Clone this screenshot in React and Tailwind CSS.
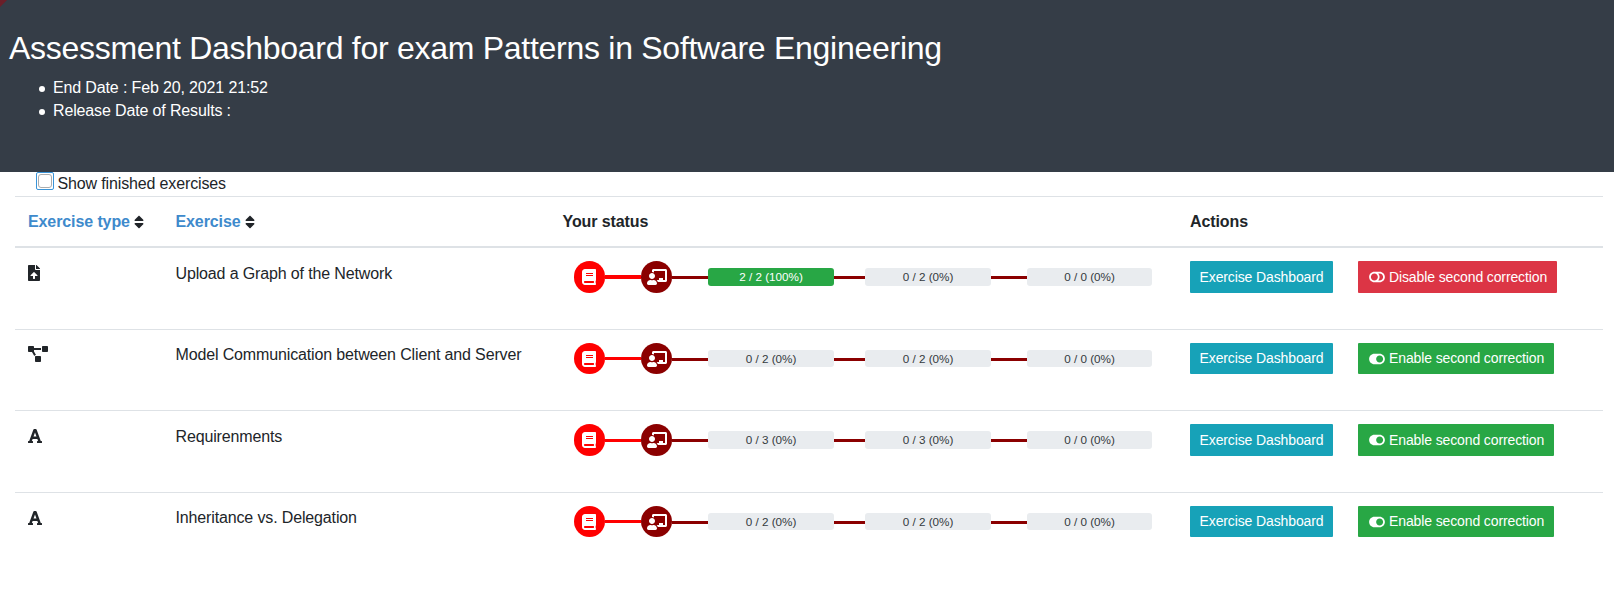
import React from 'react';
import {
  FaFileUpload,
  FaProjectDiagram,
  FaFont,
  FaSort,
  FaBook,
  FaChalkboardTeacher,
  FaToggleOn,
  FaToggleOff,
} from 'react-icons/fa';

const rows = [
  { icon: FaFileUpload, iconSize: 'mt-1 w-3', name: 'Upload a Graph of the Network', bars: ['2 / 2 (100%)', '0 / 2 (0%)', '0 / 0 (0%)'], done: true, height: 'h-[81px]', nameTop: 'pt-px', circle: 'h-8', red: 'h-1', bar: 'h-[18px]', button: 'h-8' },
  { icon: FaProjectDiagram, iconSize: 'mt-[3px] w-5', name: 'Model Communication between Client and Server', bars: ['0 / 2 (0%)', '0 / 2 (0%)', '0 / 0 (0%)'], height: 'h-[81px] border-t', nameTop: 'pt-0', circle: 'h-[31px]', red: 'h-[3px]', bar: 'h-[17px]', button: 'h-[31px]' },
  { icon: FaFont, iconSize: 'mt-1 w-[14px]', name: 'Requirenments', bars: ['0 / 3 (0%)', '0 / 3 (0%)', '0 / 0 (0%)'], height: 'h-[82px] border-t', nameTop: 'pt-px', circle: 'h-8', red: 'h-[3px]', bar: 'h-[18px]', button: 'h-8' },
  { icon: FaFont, iconSize: 'mt-1 w-[14px]', name: 'Inheritance vs. Delegation', bars: ['0 / 2 (0%)', '0 / 2 (0%)', '0 / 0 (0%)'], height: 'h-[82px] border-t', nameTop: 'pt-0', circle: 'h-[31px]', red: 'h-[3px]', bar: 'h-[17px]', button: 'h-[31px]' },
];

function Progress({ label, done, height, width }) {
  return (
    <div className={`flex items-center justify-center rounded-[3px] text-[11.7px] leading-none tracking-normal ${height} ${width} ${done ? 'bg-[#28a745] text-white' : 'bg-[#e9ecef] text-[#343a40]'}`}>
      {label}
    </div>
  );
}

function Status({ row }) {
  return (
    <div className="flex items-center">
      <div className={`flex w-[31px] items-center justify-center rounded-full bg-[#ff0000] pr-px text-white ${row.circle}`}>
        <FaBook className="h-4 w-[14px]" />
      </div>
      <div className={`w-9 bg-[#ff0000] ${row.red}`} />
      <div className={`flex w-[31px] items-center justify-center rounded-full bg-[#8b0000] text-white ${row.circle}`}>
        <FaChalkboardTeacher className="h-4 w-5" />
      </div>
      <div className="mt-px h-[3px] w-9 bg-[#8b0000]" />
      <Progress label={row.bars[0]} done={row.done} height={row.bar} width="w-[126px]" />
      <div className="mt-px h-[3px] w-[31px] bg-[#8b0000]" />
      <Progress label={row.bars[1]} height={row.bar} width="w-[126px]" />
      <div className="mt-px h-[3px] w-9 bg-[#8b0000]" />
      <Progress label={row.bars[2]} height={row.bar} width="w-[125px]" />
    </div>
  );
}

function Row({ row }) {
  const Icon = row.icon;
  const Toggle = row.done ? FaToggleOff : FaToggleOn;
  return (
    <div className={`flex items-start border-[#dee2e6] pt-[13px] pl-[13px] ${row.height}`}>
      <div className="flex w-[147.5px]">
        <Icon className={`h-4 ${row.iconSize}`} />
      </div>
      <div className={`w-[398.5px] leading-6 ${row.nameTop}`}>{row.name}</div>
      <div className="w-[616px]">
        <Status row={row} />
      </div>
      <div className="flex gap-[25px] text-[14px] text-white">
        <button className={`w-[143px] rounded-[1px] bg-[#17a2b8] tracking-[-0.12px] ${row.button}`}>Exercise Dashboard</button>
        <button className={`flex items-center gap-1 rounded-[1px] pl-[11px] tracking-[-0.12px] ${row.button} ${row.done ? 'w-[199px] bg-[#dc3545]' : 'w-[196px] bg-[#28a745]'}`}>
          <Toggle className="h-[14px] w-4 shrink-0" />
          <span className="whitespace-nowrap">{row.done ? 'Disable' : 'Enable'} second correction</span>
        </button>
      </div>
    </div>
  );
}

function Detail({ children }) {
  return (
    <li className="flex items-center gap-2">
      <span className="mt-[3px] h-[6px] w-[6px] rounded-full bg-white" />
      {children}
    </li>
  );
}

export default function App() {
  return (
    <div className="h-[602px] overflow-hidden bg-white font-['Liberation_Sans',Arial,sans-serif] text-[16px] tracking-[-0.14px] text-[#212529]">
      <header className="relative h-[172px] overflow-hidden bg-[#353d47] pt-[29px] pl-[9px] text-white">
        <div className="absolute -top-[5px] -left-[5px] h-[10px] w-[10px] rotate-45 bg-[#6b1f29]" />
        <h1 className="text-[32px] leading-[38.4px] tracking-[-0.275px]">Assessment Dashboard for exam Patterns in Software Engineering</h1>
        <ul className="mt-[9px] pl-[30px] leading-[23px]">
          <Detail>End Date : Feb 20, 2021 21:52</Detail>
          <Detail>Release Date of Results :</Detail>
        </ul>
      </header>
      <label className="flex h-6 pl-9">
        <span className="flex h-[18px] w-[18px] items-center justify-center rounded-[2px] border border-[#3a94d8]">
          <input type="checkbox" className="h-[14px] w-[14px] appearance-none rounded-[3px] border border-[#adadad] bg-white" />
        </span>
        <span className="pl-[3.5px] leading-6">Show finished exercises</span>
      </label>
      <main className="mr-[11px] ml-[15px]">
        <div className="flex h-[52px] items-center border-t border-b-2 border-[#dee2e6] pl-[13px] font-bold tracking-[-0.1px]">
          <div className="flex w-[147.5px] items-center gap-1">
            <span className="text-[#3e8acc]">Exercise type</span>
            <FaSort className="h-4 w-[10px]" />
          </div>
          <div className="flex w-[387px] items-center gap-1">
            <span className="text-[#3e8acc]">Exercise</span>
            <FaSort className="h-4 w-[10px]" />
          </div>
          <div className="w-[627.5px]">Your status</div>
          <div>Actions</div>
        </div>
        {rows.map((row) => (
          <Row key={row.name} row={row} />
        ))}
      </main>
    </div>
  );
}
